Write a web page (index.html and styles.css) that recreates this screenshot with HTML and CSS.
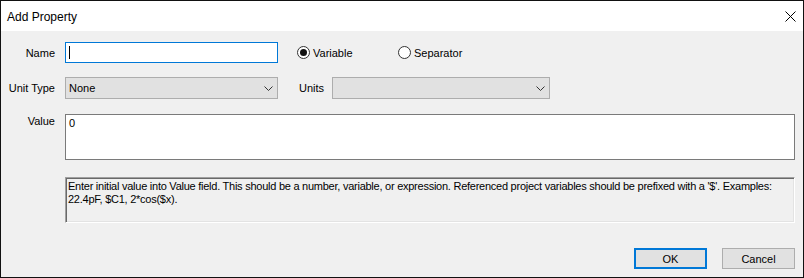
FILE: index.html
```html
<html>
    <head>
        <meta charset="utf-8" />
        <title>Add Property</title>
        <link rel="stylesheet" href="styles.css">
    </head>
    <body>
        <div class="dialog">
            <div class="titlebar">
                <span class="title">Add Property</span>
                <svg class="close" width="11" height="11" viewBox="0 0 11 11">
                    <path d="M0.5 0.5 L10.5 10.5 M10.5 0.5 L0.5 10.5" stroke="#000" stroke-width="1" fill="none" />
                </svg>
            </div>
            <div class="content">
                <div class="row row-name">
                    <span class="label">Name</span>
                    <div class="textbox"><span class="caret"></span></div>
                    <div class="radios">
                        <span class="radio-item first"><span class="radio checked"></span>Variable</span>
                        <span class="radio-item"><span class="radio"></span>Separator</span>
                    </div>
                </div>
                <div class="row row-unit">
                    <span class="label">Unit Type</span>
                    <div class="combo">
                        <span>None</span>
                        <svg width="9" height="5" viewBox="0 0 9 5"><path d="M0.5 0.5 L4.5 4.5 L8.5 0.5" stroke="#333" fill="none" /></svg>
                    </div>
                    <span class="label-units">Units</span>
                    <div class="combo combo-units">
                        <span></span>
                        <svg width="9" height="5" viewBox="0 0 9 5"><path d="M0.5 0.5 L4.5 4.5 L8.5 0.5" stroke="#333" fill="none" /></svg>
                    </div>
                </div>
                <div class="row row-value">
                    <span class="label">Value</span>
                    <div class="textarea">0</div>
                </div>
                <div class="row row-info">
                    <div class="info">Enter initial value into Value field. This should be a number, variable, or expression. Referenced project variables should be prefixed with a '$'. Examples:<br />22.4pF, $C1, 2*cos($x).</div>
                </div>
                <div class="buttons">
                    <button type="button" class="btn btn-default">OK</button>
                    <button type="button" class="btn">Cancel</button>
                </div>
            </div>
        </div>
    </body>
</html>
```

FILE: styles.css
```css
body{
    margin: 0;
    font-family: "Liberation Sans", Arial, sans-serif;
    font-size: 11px;
    color: #000;
}

.dialog{
    width: 804px;
    height: 278px;
    box-sizing: border-box;
    border: 1px solid #111;
    background-color: #f0f0f0;
}

.titlebar{
    height: 30px;
    background-color: #fff;
    display: flex;
    align-items: center;
    justify-content: space-between;
    padding: 0 7px 0 6px;
}

.title{
    font-size: 12px;
    padding-top: 1px;
}

.close{
    margin-top: 1px;
}

.content{
    padding: 11px 8px 8px 0;
}

.row{
    display: flex;
    align-items: center;
}

.label{
    width: 54px;
    margin-right: 10px;
    text-align: right;
    white-space: nowrap;
}

.row-name{
    height: 21px;
    margin-bottom: 14px;
}

.textbox{
    width: 213px;
    height: 21px;
    box-sizing: border-box;
    border: 1px solid #0078d7;
    background-color: #fff;
    padding: 3px 0 0 3px;
}

.caret{
    display: block;
    width: 1px;
    height: 13px;
    background-color: #000;
}

.radios{
    display: flex;
    margin-left: 19px;
}

.radio-item{
    display: flex;
    align-items: center;
}

.radio-item.first{
    width: 101px;
}

.radio{
    width: 13px;
    height: 13px;
    box-sizing: border-box;
    border: 1px solid #333;
    border-radius: 50%;
    background-color: #fff;
    margin-right: 3px;
    display: flex;
    align-items: center;
    justify-content: center;
}

.radio.checked::after{
    content: "";
    width: 7px;
    height: 7px;
    border-radius: 50%;
    background-color: #111;
}

.row-unit{
    height: 22px;
    margin-bottom: 15px;
}

.combo{
    width: 213px;
    height: 22px;
    box-sizing: border-box;
    border: 1px solid #adadad;
    background-color: #e1e1e1;
    display: flex;
    align-items: center;
    justify-content: space-between;
    padding: 0 4px 0 3px;
}

.label-units{
    margin-left: 21px;
    width: 33px;
}

.combo-units{
    width: 218px;
}

.row-value{
    align-items: flex-start;
    margin-bottom: 17px;
}

.row-value .label{
    padding-top: 1px;
}

.textarea{
    flex: 1;
    height: 46px;
    box-sizing: border-box;
    border: 1px solid #7a7a7a;
    background-color: #fff;
    padding: 2px 3px;
    line-height: 13px;
}

.row-info{
    padding-left: 64px;
    margin-bottom: 25px;
}

.info{
    flex: 1;
    height: 46px;
    box-sizing: border-box;
    border-top: 1px solid #a0a0a0;
    border-left: 1px solid #a0a0a0;
    border-bottom: 1px solid #fff;
    border-right: 1px solid #fff;
    box-shadow: inset 1px 1px 0 #696969, inset -1px -1px 0 #e3e3e3;
    padding: 2px 2px 0 2px;
    line-height: 13px;
    letter-spacing: -0.25px;
    white-space: nowrap;
    overflow: hidden;
}

.buttons{
    display: flex;
    justify-content: flex-end;
    gap: 15px;
}

.btn{
    width: 73px;
    height: 21px;
    box-sizing: border-box;
    border: 1px solid #adadad;
    background-color: #e1e1e1;
    font-family: "Liberation Sans", Arial, sans-serif;
    font-size: 11px;
    color: #000;
    padding: 0;
}

.btn-default{
    border: 2px solid #0078d7;
}
```
